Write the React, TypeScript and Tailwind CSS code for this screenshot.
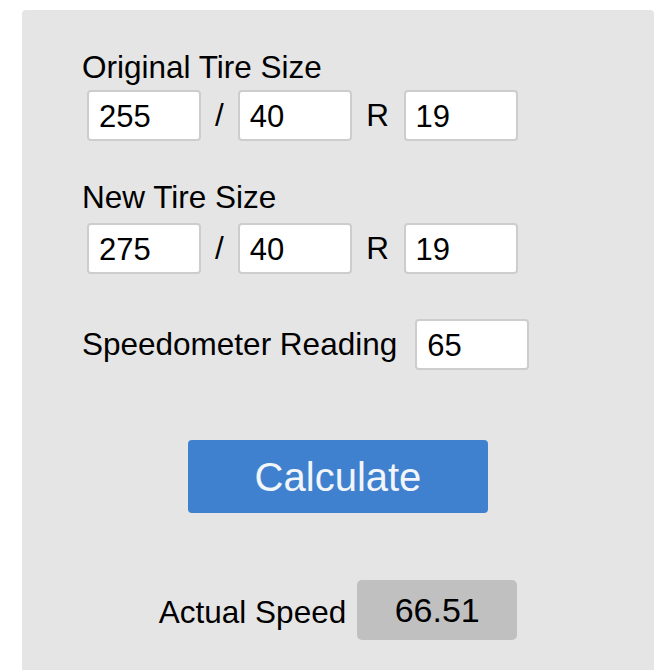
import { useState } from 'react';

const FONT = "font-['Liberation_Sans','Arial',sans-serif]";

function SizeInput({ value, onChange }: { value: string; onChange: (v: string) => void }) {
  return (
    <input
      value={value}
      onChange={(e) => onChange(e.target.value)}
      className="w-[114px] h-[51px] bg-white border-2 border-[#cdcdcd] rounded-[4px] pl-[10px] pt-[2px] text-[31px] text-black outline-none"
    />
  );
}

function TireRow({ label, size, setSize, first }: { label: string; size: string[]; setSize: (s: string[]) => void; first?: boolean }) {
  const upd = (i: number) => (v: string) => setSize(size.map((x, j) => (j === i ? v : x)));
  return (
    <div className={first ? '' : 'mt-[38px]'}>
      <p className="text-[31.5px] leading-[36px] text-black">{label}</p>
      <div className={`flex items-center ml-[5px] ${first ? 'mt-[5px]' : 'mt-[8px]'}`}>
        <SizeInput value={size[0]} onChange={upd(0)} />
        <span className="mx-[14px] text-[31.5px] text-black">/</span>
        <SizeInput value={size[1]} onChange={upd(1)} />
        <span className="mx-[14.5px] text-[31.5px] text-black">R</span>
        <SizeInput value={size[2]} onChange={upd(2)} />
      </div>
    </div>
  );
}

function diameter(s: string[]) {
  const w = parseFloat(s[0]);
  const r = parseFloat(s[1]);
  const d = parseFloat(s[2]);
  return d * 25.4 + 2 * w * (r / 100);
}

export default function App() {
  const [orig, setOrig] = useState(['255', '40', '19']);
  const [next, setNext] = useState(['275', '40', '19']);
  const [speed, setSpeed] = useState('65');
  const [actual, setActual] = useState('66.51');

  const calc = () => {
    const v = (parseFloat(speed) * diameter(next)) / diameter(orig);
    setActual(isNaN(v) ? '' : v.toFixed(2));
  };

  return (
    <div className={`bg-white min-h-[670px] pt-[10px] pl-[22px] ${FONT}`}>
      <div className="w-[632px] h-[660px] bg-[#e5e5e5] rounded-t-[4px] pl-[60px] pt-[39px]">
        <TireRow label="Original Tire Size" size={orig} setSize={setOrig} first />
        <TireRow label="New Tire Size" size={next} setSize={setNext} />

        <div className="flex items-center gap-[18px] mt-[45px]">
          <span className="text-[31.5px] text-black">Speedometer Reading</span>
          <input
            value={speed}
            onChange={(e) => setSpeed(e.target.value)}
            className="w-[114px] h-[51px] bg-white border-2 border-[#cdcdcd] rounded-[4px] pl-[10px] pt-[2px] text-[31px] text-black outline-none"
          />
        </div>

        <div className="flex justify-center mt-[70px] -ml-[60px]">
          <button
            onClick={calc}
            className="w-[300px] h-[73px] bg-[#4081cf] rounded-[4px] text-[40px] text-[#f2f5fa]"
          >
            Calculate
          </button>
        </div>

        <div className="flex justify-center items-center gap-[11px] mt-[67px] -ml-[60px]">
          <span className="text-[31.5px] text-black mt-[6px]">Actual Speed</span>
          <div className="w-[160px] h-[60px] bg-[#c0c0c0] rounded-[5px] flex items-center justify-center text-[34px] text-black">
            {actual}
          </div>
        </div>
      </div>
    </div>
  );
}
